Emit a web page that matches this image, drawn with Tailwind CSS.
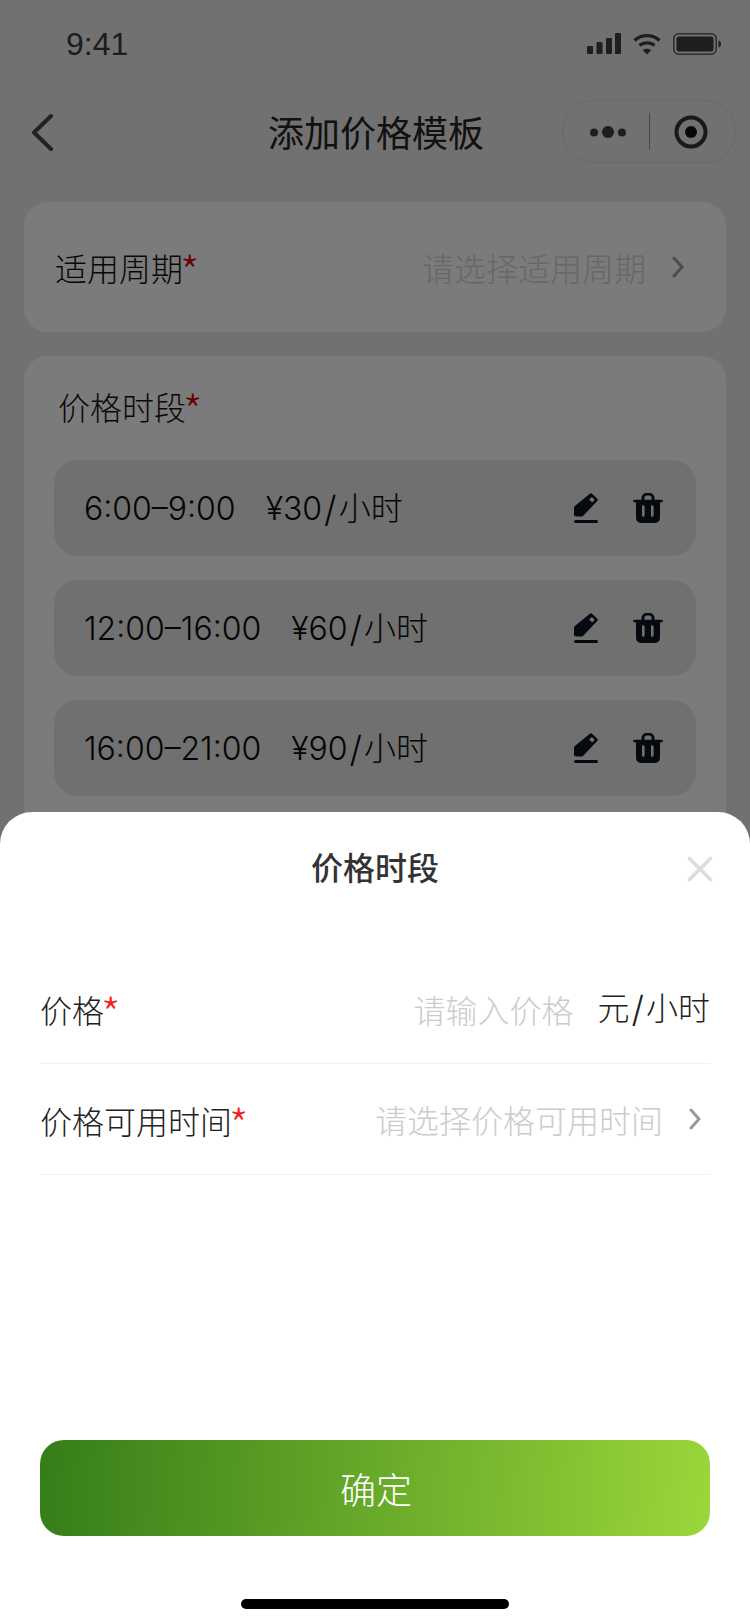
<!DOCTYPE html>
<html lang="zh">
<head>
<meta charset="utf-8">
<script src="https://cdn.jsdelivr.net/npm/@tailwindcss/browser@4"></script>
</head>
<body class="m-0">
<div class="relative w-[750px] h-[1624px] overflow-hidden bg-[#e2e2e2] font-['Noto_Sans_CJK_SC',sans-serif] font-light text-[#111111]">

  <!-- Status bar -->
  <div class="flex items-center justify-between h-[88px] pl-[66px] pr-[29px]">
    <span class="font-['Liberation_Sans',sans-serif] font-normal text-[32px] leading-none text-[#3a3a3a]">9:41</span>
    <div class="flex items-center gap-[12px]">
      <svg width="34" height="22" viewBox="0 0 34 22" fill="#3c3c3c"><rect x="0" y="13" width="6" height="8" rx="1"/><rect x="9.5" y="9" width="6" height="12" rx="1"/><rect x="19" y="5" width="6" height="16" rx="1"/><rect x="28" y="0" width="6" height="21" rx="1"/></svg>
      <svg width="28" height="22" viewBox="0 0 28 22" fill="none" stroke="#3c3c3c" stroke-width="3.4"><path d="M1.5 7.5C8.5 1 19.5 1 26.5 7.5"/><path d="M6.5 12.5C10.5 9 17.5 9 21.5 12.5"/><path d="M14 21.5L9.800 17.200C12 15.200 16 15.200 18.200 17.200Z" fill="#3c3c3c" stroke="none"/></svg>
      <svg width="48" height="22" viewBox="0 0 48 22"><rect x="0.750" y="0.750" width="42.500" height="20.500" rx="5" fill="none" stroke="#5a5a5a" stroke-width="1.500"/><rect x="3.500" y="3.500" width="37" height="15" rx="2.500" fill="#3c3c3c"/><path d="M45.500 7.500C47 8 48 9.400 48 11S47 14 45.500 14.500Z" fill="#3c3c3c"/></svg>
    </div>
  </div>

  <!-- Navigation bar -->
  <div class="relative flex items-center justify-center h-[88px] pb-[2px] pl-[2px]">
    <svg class="absolute left-[29px] top-[25px]" width="26" height="38" viewBox="0 0 26 38" fill="none" stroke="#444444" stroke-width="4" stroke-linecap="round" stroke-linejoin="round"><path d="M22 3L5 19.500L22 36"/></svg>
    <span class="text-[36px] leading-none font-normal text-[#222222]">添加价格模板</span>
    <div class="absolute left-[562px] top-[12px] flex items-center w-[174px] h-[63px] rounded-full border border-[#d2d2d2]">
      <div class="flex w-[86px] shrink-0 items-center justify-center h-full pl-[10px]">
        <svg width="44" height="14" viewBox="0 0 44 14" fill="#3c3c3c"><circle cx="5" cy="7.500" r="4"/><circle cx="19" cy="7" r="6"/><circle cx="33" cy="7.500" r="4"/></svg>
      </div>
      <div class="w-px h-[37px] bg-[#3c3c3c]/50"></div>
      <div class="flex flex-1 items-center justify-center h-full pr-[3px]">
        <svg width="34" height="34" viewBox="0 0 34 34"><circle cx="17" cy="17" r="14.500" fill="none" stroke="#333333" stroke-width="4"/><circle cx="17" cy="17" r="6" fill="#111111"/></svg>
      </div>
    </div>
  </div>

  <!-- Form cards behind the sheet -->
  <div class="flex flex-col gap-[24px] px-[24px] pt-[26px]">
    <div class="flex items-center justify-between h-[130px] rounded-[24px] bg-[#f7f7f7] pl-[31px] pr-[42px]">
      <span class="text-[32px] leading-none pt-[2px]">适用周期<span class="text-[44px] leading-[32px] align-[-8px] ml-[-3px] text-[#d40000]">*</span></span>
      <div class="flex items-center gap-[26px]">
        <span class="text-[32px] leading-none text-[#cfcfcf]">请选择适用周期</span>
        <svg width="12" height="22" viewBox="0 0 12 22" fill="none" stroke="#999999" stroke-width="3" stroke-linecap="round" stroke-linejoin="round"><path d="M2 2L10 11L2 20"/></svg>
      </div>
    </div>
    <div class="rounded-[24px] bg-[#f7f7f7] px-[30px] pt-[34px] h-[620px]">
      <div class="text-[32px] leading-none pl-[4px] mb-[35px]">价格时段<span class="text-[44px] leading-[32px] align-[-8px] ml-[-3px] text-[#d40000]">*</span></div>
      <div class="flex flex-col gap-[24px]">
        <div class="flex items-center justify-between h-[96px] rounded-[24px] bg-[#e0e0e0] pl-[30px] pr-[33px]">
          <span class="font-['Inter','Noto_Sans_CJK_SC',sans-serif] text-[32px] leading-none whitespace-pre pt-[2px] text-[#0a0a0a]"><span class="mr-[3px]">6:00–9:00   </span>¥30<span class="text-[36px] leading-[32px] align-[-2px] mx-[2px]">/</span>小时</span>
          <div class="flex items-center gap-[35px]">
            <svg width="24" height="30" viewBox="0 0 24 30" fill="#0b1220"><path fill-rule="evenodd" d="M15.500 1a2 2 0 0 1 2.800 0l4.700 4.400a2 2 0 0 1 0 2.900L9 23a2 2 0 0 1-1.400.6H2a2 2 0 0 1-2-2v-7a2 2 0 0 1 .6-1.400zM15.200 6.600l2.600-2.500 3 2.700-2.600 2.600z"/><rect x="0" y="27" width="24" height="3" rx="1.500"/></svg>
            <svg width="30" height="30" viewBox="0 0 30 30" fill="#0b1220"><path fill-rule="evenodd" d="M8.500 6.700V5a5 5 0 0 1 5-5h3a5 5 0 0 1 5 5v1.700h7a1.300 1.300 0 0 1 0 2.600h-27a1.300 1.300 0 0 1 0-2.600zM11.300 6.700V5a2.500 2.500 0 0 1 2.500-2.500h2.400A2.500 2.500 0 0 1 18.700 5v1.700z"/><path fill-rule="evenodd" d="M3 9h24v16a5 5 0 0 1-5 5H8a5 5 0 0 1-5-5zM9 13.500v9a1.300 1.300 0 0 0 2.600 0v-9a1.300 1.300 0 0 0-2.600 0zM18 13.500v9a1.300 1.300 0 0 0 2.600 0v-9a1.300 1.300 0 0 0-2.600 0z"/></svg>
          </div>
        </div>
        <div class="flex items-center justify-between h-[96px] rounded-[24px] bg-[#e0e0e0] pl-[30px] pr-[33px]">
          <span class="font-['Inter','Noto_Sans_CJK_SC',sans-serif] text-[32px] leading-none whitespace-pre pt-[2px] text-[#0a0a0a]"><span class="mr-[3px]">12:00–16:00   </span>¥60<span class="text-[36px] leading-[32px] align-[-2px] mx-[2px]">/</span>小时</span>
          <div class="flex items-center gap-[35px]">
            <svg width="24" height="30" viewBox="0 0 24 30" fill="#0b1220"><path fill-rule="evenodd" d="M15.500 1a2 2 0 0 1 2.800 0l4.700 4.400a2 2 0 0 1 0 2.900L9 23a2 2 0 0 1-1.400.6H2a2 2 0 0 1-2-2v-7a2 2 0 0 1 .6-1.400zM15.200 6.600l2.600-2.500 3 2.700-2.600 2.600z"/><rect x="0" y="27" width="24" height="3" rx="1.500"/></svg>
            <svg width="30" height="30" viewBox="0 0 30 30" fill="#0b1220"><path fill-rule="evenodd" d="M8.500 6.700V5a5 5 0 0 1 5-5h3a5 5 0 0 1 5 5v1.700h7a1.300 1.300 0 0 1 0 2.600h-27a1.300 1.300 0 0 1 0-2.600zM11.300 6.700V5a2.500 2.500 0 0 1 2.500-2.500h2.400A2.500 2.500 0 0 1 18.700 5v1.700z"/><path fill-rule="evenodd" d="M3 9h24v16a5 5 0 0 1-5 5H8a5 5 0 0 1-5-5zM9 13.500v9a1.300 1.300 0 0 0 2.600 0v-9a1.300 1.300 0 0 0-2.600 0zM18 13.500v9a1.300 1.300 0 0 0 2.600 0v-9a1.300 1.300 0 0 0-2.600 0z"/></svg>
          </div>
        </div>
        <div class="flex items-center justify-between h-[96px] rounded-[24px] bg-[#e0e0e0] pl-[30px] pr-[33px]">
          <span class="font-['Inter','Noto_Sans_CJK_SC',sans-serif] text-[32px] leading-none whitespace-pre pt-[2px] text-[#0a0a0a]"><span class="mr-[3px]">16:00–21:00   </span>¥90<span class="text-[36px] leading-[32px] align-[-2px] mx-[2px]">/</span>小时</span>
          <div class="flex items-center gap-[35px]">
            <svg width="24" height="30" viewBox="0 0 24 30" fill="#0b1220"><path fill-rule="evenodd" d="M15.500 1a2 2 0 0 1 2.800 0l4.700 4.400a2 2 0 0 1 0 2.900L9 23a2 2 0 0 1-1.400.6H2a2 2 0 0 1-2-2v-7a2 2 0 0 1 .6-1.400zM15.200 6.600l2.600-2.500 3 2.700-2.600 2.600z"/><rect x="0" y="27" width="24" height="3" rx="1.500"/></svg>
            <svg width="30" height="30" viewBox="0 0 30 30" fill="#0b1220"><path fill-rule="evenodd" d="M8.500 6.700V5a5 5 0 0 1 5-5h3a5 5 0 0 1 5 5v1.700h7a1.300 1.300 0 0 1 0 2.600h-27a1.300 1.300 0 0 1 0-2.600zM11.300 6.700V5a2.500 2.500 0 0 1 2.500-2.500h2.400A2.500 2.500 0 0 1 18.700 5v1.700z"/><path fill-rule="evenodd" d="M3 9h24v16a5 5 0 0 1-5 5H8a5 5 0 0 1-5-5zM9 13.500v9a1.300 1.300 0 0 0 2.600 0v-9a1.300 1.300 0 0 0-2.600 0zM18 13.500v9a1.300 1.300 0 0 0 2.600 0v-9a1.300 1.300 0 0 0-2.600 0z"/></svg>
          </div>
        </div>
      </div>
    </div>
  </div>

  <!-- Dimming layer -->
  <div class="absolute inset-0 bg-black/50"></div>

  <!-- Bottom sheet -->
  <div class="absolute left-0 right-0 bottom-0 h-[812px] rounded-t-[32px] bg-white flex flex-col px-[40px] text-[#222222]">
    <div class="relative flex items-center justify-center h-[108px] shrink-0">
      <span class="text-[32px] leading-none font-medium text-[#333333]">价格时段</span>
      <svg class="absolute right-[-3px] top-[44px]" width="26" height="26" viewBox="0 0 26 26" fill="none" stroke="#dddddd" stroke-width="3.800" stroke-linecap="round"><path d="M2.500 2.500L23.500 23.500M23.500 2.500L2.500 23.500"/></svg>
    </div>
    <div class="flex items-center justify-between h-[144px] pt-[34px] border-b border-[#f2f2f2] shrink-0">
      <span class="text-[32px] leading-none pt-[4px]">价格<span class="text-[44px] leading-[32px] align-[-8px] ml-[-3px] text-[#f02020]">*</span></span>
      <div class="flex items-center gap-[24px]">
        <span class="text-[32px] leading-none text-[#cccccc]">请输入价格</span>
        <span class="font-['Inter','Noto_Sans_CJK_SC',sans-serif] text-[32px] leading-none">元<span class="text-[36px] leading-[32px] align-[-2px] mx-[2px]">/</span>小时</span>
      </div>
    </div>
    <div class="flex items-center justify-between h-[111px] border-b border-[#f2f2f2] shrink-0">
      <span class="text-[32px] leading-none pt-[4px]">价格可用时间<span class="text-[44px] leading-[32px] align-[-8px] ml-[-3px] text-[#f02020]">*</span></span>
      <div class="flex items-center gap-[26px] pr-[9px]">
        <span class="text-[32px] leading-none text-[#cccccc]">请选择价格可用时间</span>
        <svg width="12" height="22" viewBox="0 0 12 22" fill="none" stroke="#999999" stroke-width="3" stroke-linecap="round" stroke-linejoin="round"><path d="M2 2L10 11L2 20"/></svg>
      </div>
    </div>
    <div class="flex-1"></div>
    <button class="flex items-center justify-center h-[96px] w-full rounded-[24px] bg-[linear-gradient(95deg,#357d19_0%,#9bd63a_100%)] text-[36px] leading-none text-white shrink-0 pl-[2px]">确定</button>
    <div class="flex items-start justify-center h-[88px] pt-[63px] shrink-0">
      <div class="w-[268px] h-[10px] rounded-full bg-black"></div>
    </div>
  </div>
</div>
</body>
</html>
